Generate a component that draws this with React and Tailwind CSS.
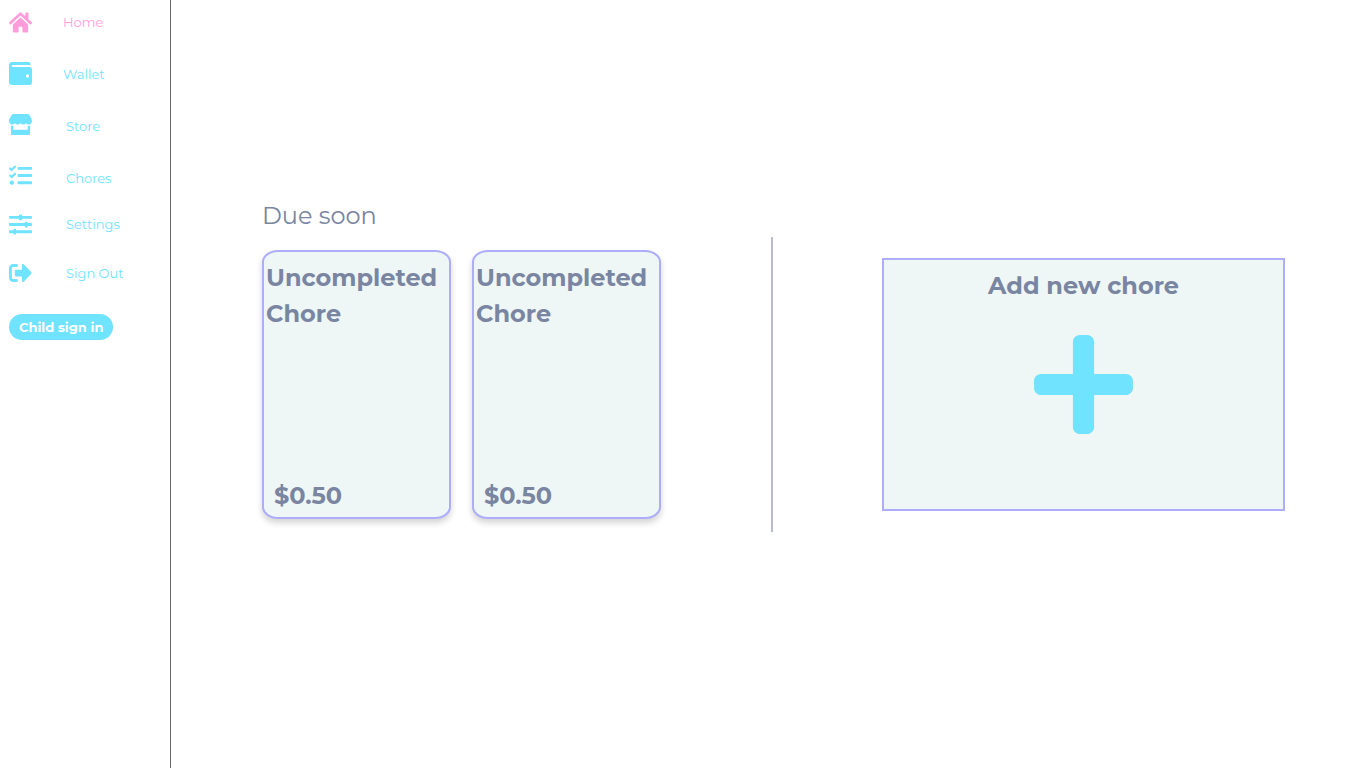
import { FaHome, FaStore, FaTasks, FaSlidersH, FaSignOutAlt, FaPlus } from "react-icons/fa";

function WalletIcon(props) {
  return (
    <svg viewBox="0 0 23 23" fill="currentColor" {...props}>
      <path
        fillRule="evenodd"
        d="M3 0H19.5A2.2 2.2 0 0 1 21.6 2.3V3H3.8A1 1 0 0 0 3.8 5H20.8A2.2 2.2 0 0 1 23 7V20.6A2.3 2.3 0 0 1 20.7 23H3A3 3 0 0 1 0 20V3A3 3 0 0 1 3 0ZM18.5 12.3A1.6 1.7 0 1 0 18.5 15.7A1.6 1.7 0 1 0 18.5 12.3Z"
      />
    </svg>
  );
}

const links = [
  { label: "Home", Icon: FaHome, row: "h-6 items-center text-[#ff9ddb]", icon: "h-[23px]", text: "pl-[31px]" },
  { label: "Wallet", Icon: WalletIcon, row: "mt-7 h-6 items-center", icon: "h-[23px] self-start", text: "pl-[31px]" },
  { label: "Store", Icon: FaStore, row: "mt-7 h-6 items-center", icon: "h-[21px] self-start", text: "pl-[34px]" },
  { label: "Chores", Icon: FaTasks, row: "mt-[26px] h-[26px] items-end", icon: "h-[23px] self-start", text: "pl-[34px]" },
  { label: "Settings", Icon: FaSlidersH, row: "mt-[22px] h-6 items-center", icon: "h-[23px]", text: "pl-[34px]" },
  { label: "Sign Out", Icon: FaSignOutAlt, row: "mt-[25px] h-6 items-center", icon: "h-6", text: "pl-[34px]" },
];

const chores = [
  { id: 1, name: "Uncompleted Chore", price: "$0.50" },
  { id: 2, name: "Uncompleted Chore", price: "$0.50" },
];

function Sidebar() {
  return (
    <aside className="w-[171px] shrink-0 border-r border-[#666666] pl-[9px] pt-2.5">
      <nav className="flex flex-col text-[#6fe3ff]">
        {links.map(({ label, Icon, row, icon, text }) => (
          <a key={label} href="#" className={`flex ${row}`}>
            <Icon className={`w-[23px] shrink-0 ${icon}`} preserveAspectRatio="none" aria-hidden="true" />
            <span className={`text-[13px] leading-6 ${text}`}>{label}</span>
          </a>
        ))}
      </nav>
      <button type="button" className="mt-[29px] h-[26px] rounded-full bg-[#6fe3ff] px-2.5 text-[13px] leading-6 font-bold text-white">
        Child sign in
      </button>
    </aside>
  );
}

function ChoreCard({ name, price }) {
  return (
    <article className="flex h-[269px] w-[189px] flex-col justify-between rounded-[16px/12px] border-2 border-[#adadfa] bg-[#eef7f6] pt-2 pb-[3px] shadow-[0_4px_6px_rgba(0,0,0,0.17)]">
      <h2 className="px-0.5">{name}</h2>
      <p className="px-2.5">{price}</p>
    </article>
  );
}

export default function App() {
  return (
    <div className="flex min-h-screen bg-white font-['Montserrat','Inter',sans-serif] text-[#7a85a1]">
      <Sidebar />
      <main className="flex grow items-center justify-between pr-[81px] pl-[91px]">
        <section className="pb-[52px]">
          <h1 className="mb-4 text-[24px] leading-9">Due soon</h1>
          <div className="flex gap-[21px] text-[24px] leading-9 font-bold">
            {chores.map((chore) => (
              <ChoreCard key={chore.id} name={chore.name} price={chore.price} />
            ))}
          </div>
        </section>
        <div className="h-[295px] w-0.5 bg-[#b9bccf]" />
        <button type="button" className="flex h-[253px] w-[403px] flex-col items-center border-2 border-[#adadfa] bg-[#eef7f6] pt-2">
          <span className="text-[24px] leading-9 font-bold">Add new chore</span>
          <FaPlus className="mt-6 size-[113px] text-[#6fe3ff]" aria-hidden="true" />
        </button>
      </main>
    </div>
  );
}
